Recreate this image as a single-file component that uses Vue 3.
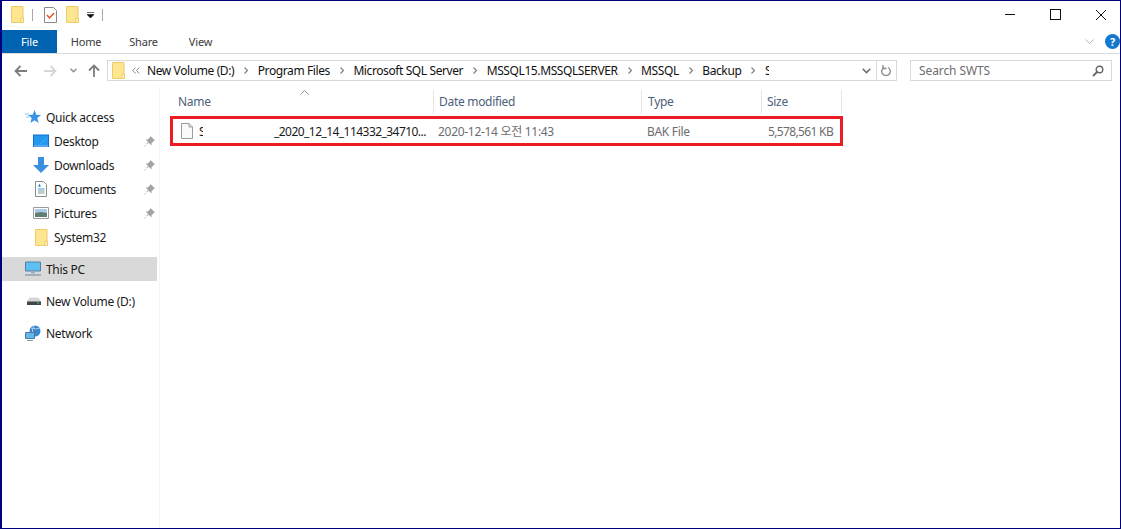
<script setup>
const crumbs = ['New Volume (D:)', 'Program Files', 'Microsoft SQL Server', 'MSSQL15.MSSQLSERVER', 'MSSQL', 'Backup']
const tabs = ['Home', 'Share', 'View']
const quick = [
  { name: 'Desktop', icon: 'desktop' },
  { name: 'Downloads', icon: 'downloads' },
  { name: 'Documents', icon: 'documents' },
  { name: 'Pictures', icon: 'pictures' },
]
</script>

<template>
  <div class="win">
    <div class="titlebar">
      <svg class="folder" viewBox="0 0 13 17"><path d="M.5.5h11.5v16H.5z" fill="#fde68f" stroke="#eccb68"/><path d="M10 12h2.500v4.500H10z" fill="#fff3c4" stroke="#eccb68"/></svg>
      <span class="qsep"></span>
      <svg class="check" viewBox="0 0 13 16"><path d="M.5.500h9l3 3v12H.5z" fill="#fff" stroke="#8a8a8a"/><path d="M3 8l2.500 3L10 6" fill="none" stroke="#e8501c" stroke-width="1.400"/></svg>
      <svg class="folder f2" viewBox="0 0 13 17"><path d="M.5.5h11.500v16H.5z" fill="#fde68f" stroke="#eccb68"/><path d="M10 12h2.500v4.500H10z" fill="#fff3c4" stroke="#eccb68"/></svg>
      <svg class="drop" viewBox="0 0 7 6"><path d="M0 .5h7M0 2.500h7L3.500 6z" fill="#111" stroke="#111" stroke-width=".6"/></svg>
      <span class="qsep s2"></span>
      <div class="winbtns">
        <span class="minbtn"></span>
        <span class="maxbtn"></span>
        <svg class="closebtn" viewBox="0 0 10 10"><path d="M0 0l10 10M10 0L0 10" stroke="#111" fill="none"/></svg>
      </div>
    </div>

    <div class="ribbon">
      <div class="filetab">File</div>
      <div v-for="t in tabs" :key="t" class="tab">{{ t }}</div>
      <svg class="collapse" viewBox="0 0 9 5"><path d="M.5.500l4 4 4-4" fill="none" stroke="#b5b5b5"/></svg>
      <span class="help">?</span>
    </div>

    <div class="navbar">
      <svg class="arrow" viewBox="0 0 13 12"><path d="M13 6H2M6.500 1L1.500 6l5 5" fill="none" stroke="#7d7d7d" stroke-width="1.800"/></svg>
      <svg class="arrow fwd" viewBox="0 0 13 12"><path d="M0 6h11M6.500 1l5 5-5 5" fill="none" stroke="#d6d6d6" stroke-width="1.800"/></svg>
      <svg class="small-down" viewBox="0 0 7 5"><path d="M.5.800L3.500 3.800 6.500.8" fill="none" stroke="#8c8c8c" stroke-width="1.300"/></svg>
      <svg class="arrow up" viewBox="0 0 12 13"><path d="M6 13V2M1 6.500l5-5 5 5" fill="none" stroke="#7d7d7d" stroke-width="1.800"/></svg>
      <div class="address">
        <svg class="folder addr-folder" viewBox="0 0 13 17"><path d="M.5.5h11.500v16H.5z" fill="#fde68f" stroke="#eccb68"/><path d="M10 12h2.500v4.500H10z" fill="#fff3c4" stroke="#eccb68"/></svg>
        <svg class="chev2" viewBox="0 0 8 7"><path d="M3.500.5L.8 3.500l2.700 3M7.200.5L4.500 3.500l2.700 3" fill="none" stroke="#8a8a8a"/></svg>
        <template v-for="c in crumbs" :key="c">
          <span class="crumb">{{ c }}</span>
          <svg class="sep" viewBox="0 0 4 7"><path d="M.5.500l3 3-3 3" fill="none" stroke="#7a7a7a" stroke-width="1.100"/></svg>
        </template>
        <span class="crumb clipped">S</span>
        <div class="addr-end">
          <svg class="addr-down" viewBox="0 0 9 6"><path d="M.7.800l3.800 3.800L8.300.8" fill="none" stroke="#6e6e6e" stroke-width="1.500"/></svg>
          <span class="addr-line"></span>
          <svg class="refresh" viewBox="0 0 11 13"><path d="M3 3.500a4.300 4.300 0 1 0 4 0" fill="none" stroke="#8a8a8a" stroke-width="1.300"/><path d="M2 1v3.500h3.500" fill="none" stroke="#8a8a8a" stroke-width="1.300"/></svg>
        </div>
      </div>
      <div class="search">
        <span>Search SWTS</span>
        <svg class="lens" viewBox="0 0 12 12"><circle cx="7.500" cy="4.500" r="3.300" fill="none" stroke="#666" stroke-width="1.400"/><path d="M5 7L1 11" stroke="#666" stroke-width="1.800"/></svg>
      </div>
    </div>

    <div class="body">
      <aside class="side">
        <div class="row top-row">
          <svg class="ico star" viewBox="0 0 16 15"><path d="M9.500 0l1.800 4.800 4.700.3-3.700 3 1.300 5-4.100-2.800-4.100 2.800 1.300-5L3 5.100l4.700-.3z" fill="#3a93e6"/><path d="M0 4h4M1 7h3" stroke="#8cc3f2"/></svg>
          <span>Quick access</span>
        </div>
        <div v-for="q in quick" :key="q.name" class="row sub">
          <svg v-if="q.icon === 'desktop'" class="ico" viewBox="0 0 16 13"><path d="M0 0h16v12.500H0z" fill="#0b6fd1"/><path d="M1 1h14v10H1z" fill="#2497f0"/><path d="M6 11l8-8" stroke="#4fb0f5"/><path d="M1 11.500h14" stroke="#9fd4fa"/></svg>
          <svg v-else-if="q.icon === 'downloads'" class="ico" viewBox="0 0 16 16"><path d="M5 0h6v8h5l-8 8-8-8h5z" fill="#3b8fe0"/></svg>
          <svg v-else-if="q.icon === 'documents'" class="ico" viewBox="0 0 16 16"><path d="M2.500.5h8l3 3v12h-11z" fill="#fff" stroke="#8d8d8d"/><path d="M5 5h3M6.500 3v3M5 8h6.500" stroke="#3d95dd"/><path d="M5 10h6.500M5 12h6.500" stroke="#7d9a90"/></svg>
          <svg v-else class="ico" viewBox="0 0 16 12"><path d="M.5.500h15v11H.5z" fill="#fff" stroke="#9a9a9a"/><path d="M2 2h12v4H2z" fill="#a9cbe8"/><path d="M2 6l6-1 6 1v4H2z" fill="#5d7f74"/></svg>
          <span class="rowtext">{{ q.name }}</span>
          <svg class="pin" viewBox="0 0 11 11"><path d="M6.500 0l4.500 4.500-1.200.4-2.300 2.300v2.300L3.800 6 .6 10.500 0 10 4.900 6.800 1.500 3.500h2.300L6 1.200z" fill="#a3a3a3"/></svg>
        </div>
        <div class="row sub">
          <svg class="ico folder-ico" viewBox="0 0 13 17"><path d="M.5.500h11.500v16H.5z" fill="#fde68f" stroke="#eccb68"/><path d="M10 12h2.500v4.500H10z" fill="#fff3c4" stroke="#eccb68"/></svg>
          <span>System32</span>
        </div>
        <div class="row top-row active">
          <svg class="ico pc" viewBox="0 0 16 15"><path d="M.5.500h15v9H.5z" fill="#5cc0f5" stroke="#5b7f99"/><path d="M6 10h4v2H6z" fill="#9bb0c0"/><path d="M0 13.500h16" stroke="#8ba3b8" stroke-width="1.500"/></svg>
          <span>This PC</span>
        </div>
        <div class="row top-row gap8">
          <svg class="ico drive" viewBox="0 0 14 8"><path d="M2.500.5h9L14 4.500v3.500H0V4.500z" fill="#d6d6d6"/><path d="M0 4.500h14V8H0z" fill="#3f4549"/><path d="M10 6h2" stroke="#4ed24e"/></svg>
          <span>New Volume (D:)</span>
        </div>
        <div class="row top-row gap8">
          <svg class="ico pc" viewBox="0 0 16 16"><circle cx="10" cy="6" r="5.500" fill="#3b87cf"/><path d="M6 3c3 1 6 1 9 0M9 1c-2 3-2 7 0 10" stroke="#a8d4f3" fill="none"/><path d="M.5 7.500h9v6h-9z" fill="#62b8ec" stroke="#53789a"/><path d="M2 15.500h6" stroke="#7d9ab4"/></svg>
          <span>Network</span>
        </div>
      </aside>

      <main class="list">
        <svg class="sort" viewBox="0 0 9 5"><path d="M.5 4.500l4-4 4 4" fill="none" stroke="#9a9a9a"/></svg>
        <div class="head">
          <div class="col c-name">Name</div>
          <div class="col c-date">Date modified</div>
          <div class="col c-type">Type</div>
          <div class="col c-size">Size</div>
        </div>
        <div class="file">
          <svg class="file-ico" viewBox="0 0 12 16"><path d="M.5.500h7.500l3.500 3.500v11.500H.5z" fill="#fafafa" stroke="#9c9c9c"/><path d="M8 .5V4h3.500" fill="none" stroke="#9c9c9c"/></svg>
          <span class="file-s">S</span>
          <span class="file-name">_2020_12_14_114332_34710...</span>
          <span class="file-date">2020-12-14 오전 11:43</span>
          <span class="file-type">BAK File</span>
          <span class="file-size">5,578,561 KB</span>
        </div>
      </main>
    </div>
  </div>
</template>

<style>
html, body { margin: 0; background: #fff; }
</style>

<style scoped>
.win {
  width: 1121px;
  height: 529px;
  box-sizing: border-box;
  border: 1px solid #00007f;
  border-left-width: 2px;
  background: #fff;
  font-family: "Noto Sans", "Noto Sans CJK KR", sans-serif;
  font-size: 12px;
  letter-spacing: -0.3px;
  color: #1a1a1a;
  overflow: hidden;
  display: flex;
  flex-direction: column;
}
svg { display: block; flex: none; }
.titlebar {
  height: 29px;
  box-sizing: border-box;
  padding-bottom: 2px;
  display: flex;
  align-items: center;
  flex: none;
}
.folder { width: 13px; height: 17px; margin-left: 9px; }
.qsep { width: 1px; height: 12px; background: #a8a8a8; margin-left: 8px; }
.check { width: 13px; height: 16px; margin-left: 11px; }
.f2 { margin-left: 9px; }
.drop { width: 7px; height: 6px; margin-left: 8px; }
.s2 { margin-left: 8px; }
.winbtns { margin-left: auto; display: flex; align-items: center; }
.minbtn { width: 10px; height: 1px; background: #111; margin-right: 35px; }
.maxbtn { width: 9px; height: 9px; border: 1px solid #111; margin-right: 35px; }
.closebtn { width: 10px; height: 10px; margin-right: 14px; }

.ribbon {
  height: 24px;
  flex: none;
  box-sizing: border-box;
  border-bottom: 1px solid #dadada;
  display: flex;
  align-items: center;
}
.filetab {
  width: 55px;
  height: 23px;
  background: #0063b1;
  color: #fff;
  font-size: 11px;
  letter-spacing: -0.1px;
  display: flex;
  align-items: center;
  justify-content: center;
}
.tab { width: 57px; text-align: center; color: #3b3b3b; font-size: 11px; letter-spacing: -0.2px; }
.tab:nth-child(2) { width: 58px; }
.collapse { width: 9px; height: 5px; margin-left: auto; margin-right: 11px; }
.help {
  width: 15px;
  height: 15px;
  border-radius: 50%;
  background: #1379ce;
  color: #fff;
  font-size: 11px;
  font-weight: 700;
  text-align: center;
  line-height: 15px;
}

.navbar {
  height: 33px;
  flex: none;
  display: flex;
  align-items: center;
}
.arrow { width: 13px; height: 12px; margin-left: 12px; }
.fwd { margin-left: 17px; }
.small-down { width: 7px; height: 5px; margin-left: 13px; }
.up { width: 12px; height: 13px; margin-left: 11px; }
.address {
  width: 790px;
  height: 21px;
  margin-left: 7px;
  box-sizing: border-box;
  border: 1px solid #d9d9d9;
  display: flex;
  align-items: center;
  color: #111;
}
.addr-folder { margin-left: 4px; }
.chev2 { width: 8px; height: 7px; margin-left: 7px; margin-right: 7px; }
.crumb { white-space: nowrap; letter-spacing: -0.4px; }
.sep { width: 4px; height: 7px; margin: 0 9.5px 0 10px; }
.clipped { width: 4px; overflow: hidden; }
.addr-end { margin-left: auto; display: flex; align-items: center; height: 100%; }
.addr-down { width: 9px; height: 6px; margin-right: 5px; }
.addr-line { width: 1px; height: 100%; background: #d9d9d9; }
.refresh { width: 11px; height: 13px; margin: 0 4px; }
.search {
  width: 202px;
  height: 21px;
  margin-left: 13px;
  box-sizing: border-box;
  border: 1px solid #d9d9d9;
  display: flex;
  align-items: center;
  justify-content: space-between;
  padding: 0 7px 0 8px;
  color: #6d6d6d;
  letter-spacing: -0.1px;
}
.lens { width: 12px; height: 12px; }

.body { flex: 1; display: flex; min-height: 0; }
.side {
  width: 158px;
  box-sizing: border-box;
  flex: none;
  padding-top: 18px;
  border-right: 1px solid #f6f6f6;
}
.row { height: 24px; display: flex; align-items: center; color: #1a1a1a; }
.top-row { padding-left: 23px; }
.sub { padding-left: 31px; }
.ico { width: 16px; height: 16px; margin-right: 5px; }
.star { height: 15px; margin-right: 5px; }
.rowtext { flex: 1; }
.pin { width: 11px; height: 11px; margin-right: 4px; }
.folder-ico { margin-left: 2px; margin-right: 6px; width: 13px; height: 17px; }
.active { background: #d9d9d9; margin-top: 8px; margin-right: 2px; }
.gap8 { margin-top: 8px; }
.pc { margin-right: 5px; }
.drive { width: 14px; height: 8px; margin-left: 2px; margin-right: 5px; }

.list { flex: 1; position: relative; padding-top: 3px; }
.sort { position: absolute; left: 140px; top: 3px; width: 9px; height: 5px; }
.head { height: 24px; display: flex; margin-left: 13px; width: 671px; }
.col {
  box-sizing: border-box;
  height: 24px;
  line-height: 23px;
  padding-left: 5px;
  color: #4c607a;
  border-right: 1px solid #e5e5e5;
}
.c-name { width: 261px; }
.c-date { width: 208px; }
.c-type { width: 120px; padding-left: 6px; }
.c-size { width: 80px; }
.file {
  box-sizing: border-box;
  width: 673px;
  height: 30px;
  margin-left: 10px;
  margin-top: 2px;
  border: 3px solid #ed1c24;
  display: flex;
  align-items: center;
  color: #6d6d6d;
  white-space: nowrap;
}
.file-ico { width: 12px; height: 16px; margin-left: 8px; }
.file-s { width: 4px; overflow: hidden; margin-left: 6px; color: #1a1a1a; }
.file-name { width: 164px; margin-left: 71px; color: #1a1a1a; letter-spacing: -0.55px; }
.file-date { width: 209px; }
.file-type { width: 121px; }
.file-size { width: 70px; letter-spacing: -0.65px; }
</style>
